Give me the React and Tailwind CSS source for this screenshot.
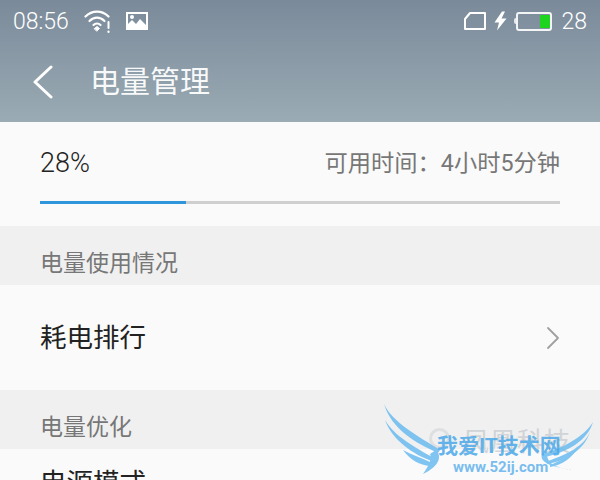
const cjk = { fontFamily: '"Roboto", "Noto Sans CJK SC", sans-serif' };

// status bar icons
const Wifi = () => (
    <svg width="28" height="26" viewBox="0 0 28 26" fill="none" stroke="white" strokeWidth="2.2" strokeLinecap="round">
        <path d="M1.5 8.5C8 2 18 2 24.5 8.5" />
        <path d="M5.5 13C10 8.5 16 8.5 20.5 13" />
        <path d="M9.5 17C11.5 15 14.5 15 16.5 17" />
        <path d="M10.5 20.5L13 18.5L15.5 20.5L13 23Z" fill="white" strokeWidth="1" />
        <path d="M24.5 14V20" strokeWidth="2" />
        <path d="M24.5 23.5V24" strokeWidth="2.2" />
    </svg>
);

const Picture = () => (
    <svg width="24" height="20" viewBox="0 0 24 20">
        <path fillRule="evenodd" fill="white" d="M1 1H23V19H1ZM3 3V13L7 9L11 13L15 8L21 14V3Z" />
        <circle cx="7" cy="6" r="2" fill="white" />
    </svg>
);

const Sim = () => (
    <svg width="24" height="20" viewBox="0 0 24 20" fill="none" stroke="white" strokeWidth="2" strokeLinejoin="round">
        <path d="M7 2H22V18H2V8Z" />
    </svg>
);

const Bolt = () => (
    <svg width="13" height="20" viewBox="0 0 13 20" fill="white">
        <path d="M8 0.5L0.5 11.5H5L3 19.5L12.5 7.5H7.5L11 0.5Z" />
    </svg>
);

const Battery = () => (
    <div className="flex items-center">
        <div className="w-[2px] h-[6px] bg-white/80 rounded-l-sm" />
        <div className="w-[36px] h-[19px] rounded-[3px] border-2 border-white/90 flex justify-end pr-0 py-[1px]">
            <div className="w-[10px] bg-[#1fd41f]" />
        </div>
    </div>
);

const BackArrow = () => (
    <svg width="22" height="34" viewBox="0 0 22 34" fill="none" stroke="white" strokeWidth="3" strokeLinecap="round" strokeLinejoin="round">
        <path d="M19 2L3 17L19 32" />
    </svg>
);

const RowArrow = () => (
    <svg width="14" height="24" viewBox="0 0 14 24" fill="none" stroke="#a0a0a0" strokeWidth="1.8" strokeLinecap="round" strokeLinejoin="round">
        <path d="M2 2L12 12L2 22" />
    </svg>
);

const SectionLabel = ({ children }) => (
    <div className="h-[59px] bg-[#f0f0f0] px-[40px] pt-[22px] text-[23px] leading-[32px] text-[#777777]">
        {children}
    </div>
);

const Watermark = () => (
    <div className="absolute left-[384px] top-[404px] w-[212px] h-[76px] pointer-events-none">
        <div className="absolute left-[45px] top-[24px] w-[21px] h-[21px] rounded-full border-[3px] border-[#d4d7da]/70" />
        <div className="absolute left-[79px] top-[22px] text-[26px] leading-[32px] text-[#c4c8cc] tracking-[1px] whitespace-nowrap opacity-70">凤凰科技</div>
        <svg className="absolute inset-0 opacity-85" width="212" height="76" viewBox="0 0 212 76" fill="#6bbcf0">
            <path d="M0 0C8 18 34 32 56 46L54 49C32 39 8 26 0 0Z" />
            <path d="M1 16C10 32 32 44 50 54L48 57C30 51 8 36 1 16Z" />
            <path d="M19 46C28 51 38 54 48 59L46 62C36 61 26 56 19 46Z" />
            <path d="M52 46C58 52 56 62 39 70C46 60 48 54 46 50Z" />
            <path d="M209 18C202 30 184 42 160 50L161 53C184 48 204 36 209 18Z" />
            <path d="M206 28C200 42 184 50 164 57L163 60C182 57 200 46 206 28Z" />
            <path d="M194 42C188 51 176 57 166 61L166 63C178 61 190 53 194 42Z" />
            <path d="M160 48C154 54 158 62 189 66C172 64 162 60 163 48Z" />
        </svg>
        <div className="absolute left-[53px] top-[29px] text-[21px] leading-[26px] font-bold text-[#4aa8ea]/85 whitespace-nowrap">我爱IT技术网</div>
        <div className="absolute left-[69px] top-[54px] text-[15px] leading-[18px] font-bold text-[#79bdee] whitespace-nowrap">www.52ij.com</div>
    </div>
);

export default function App() {
    return (
        <div className="relative w-[600px] h-[480px] overflow-hidden bg-[#fafafa]" style={cjk}>
            <div className="h-[122px] bg-linear-to-b from-[#7b8a9a] to-[#9aabb4] text-white">
                <div className="h-[42px] flex items-center pl-[13px] pr-[13px]">
                    <span className="text-[23px] font-light pt-[2px]">08:56</span>
                    <div className="ml-[15px]"><Wifi /></div>
                    <div className="ml-[13px]"><Picture /></div>
                    <div className="ml-auto flex items-center gap-[7px]">
                        <Sim />
                        <Bolt />
                        <Battery />
                        <span className="text-[23px] font-light ml-[2px] pt-[2px]">28</span>
                    </div>
                </div>
                <div className="h-[80px] flex items-center pl-[32px] pb-[1px]">
                    <BackArrow />
                    <span className="ml-[36px] text-[30px] leading-[40px] text-white/95 font-normal">电量管理</span>
                </div>
            </div>

            <div className="h-[104px] px-[40px] pt-[23px]">
                <div className="flex items-center justify-between h-[36px]">
                    <span className="text-[27px] font-light text-[#222222]">28%</span>
                    <span className="text-[23.25px] text-[#777777]">可用时间：4小时5分钟</span>
                </div>
                <div className="mt-[20px] h-[3px] bg-[#cfcfcf]">
                    <div className="w-[146px] h-[3px] bg-[#2f96dc]" />
                </div>
            </div>

            <SectionLabel>电量使用情况</SectionLabel>

            <div className="h-[105px] px-[40px] flex items-center justify-between">
                <span className="text-[26.5px] text-[#222222]">耗电排行</span>
                <RowArrow />
            </div>

            <SectionLabel>电量优化</SectionLabel>

            <div className="px-[40px] pt-[16px]">
                <span className="text-[26.5px] leading-[36px] text-[#222222]">电源模式</span>
            </div>

            <Watermark />
        </div>
    );
}
